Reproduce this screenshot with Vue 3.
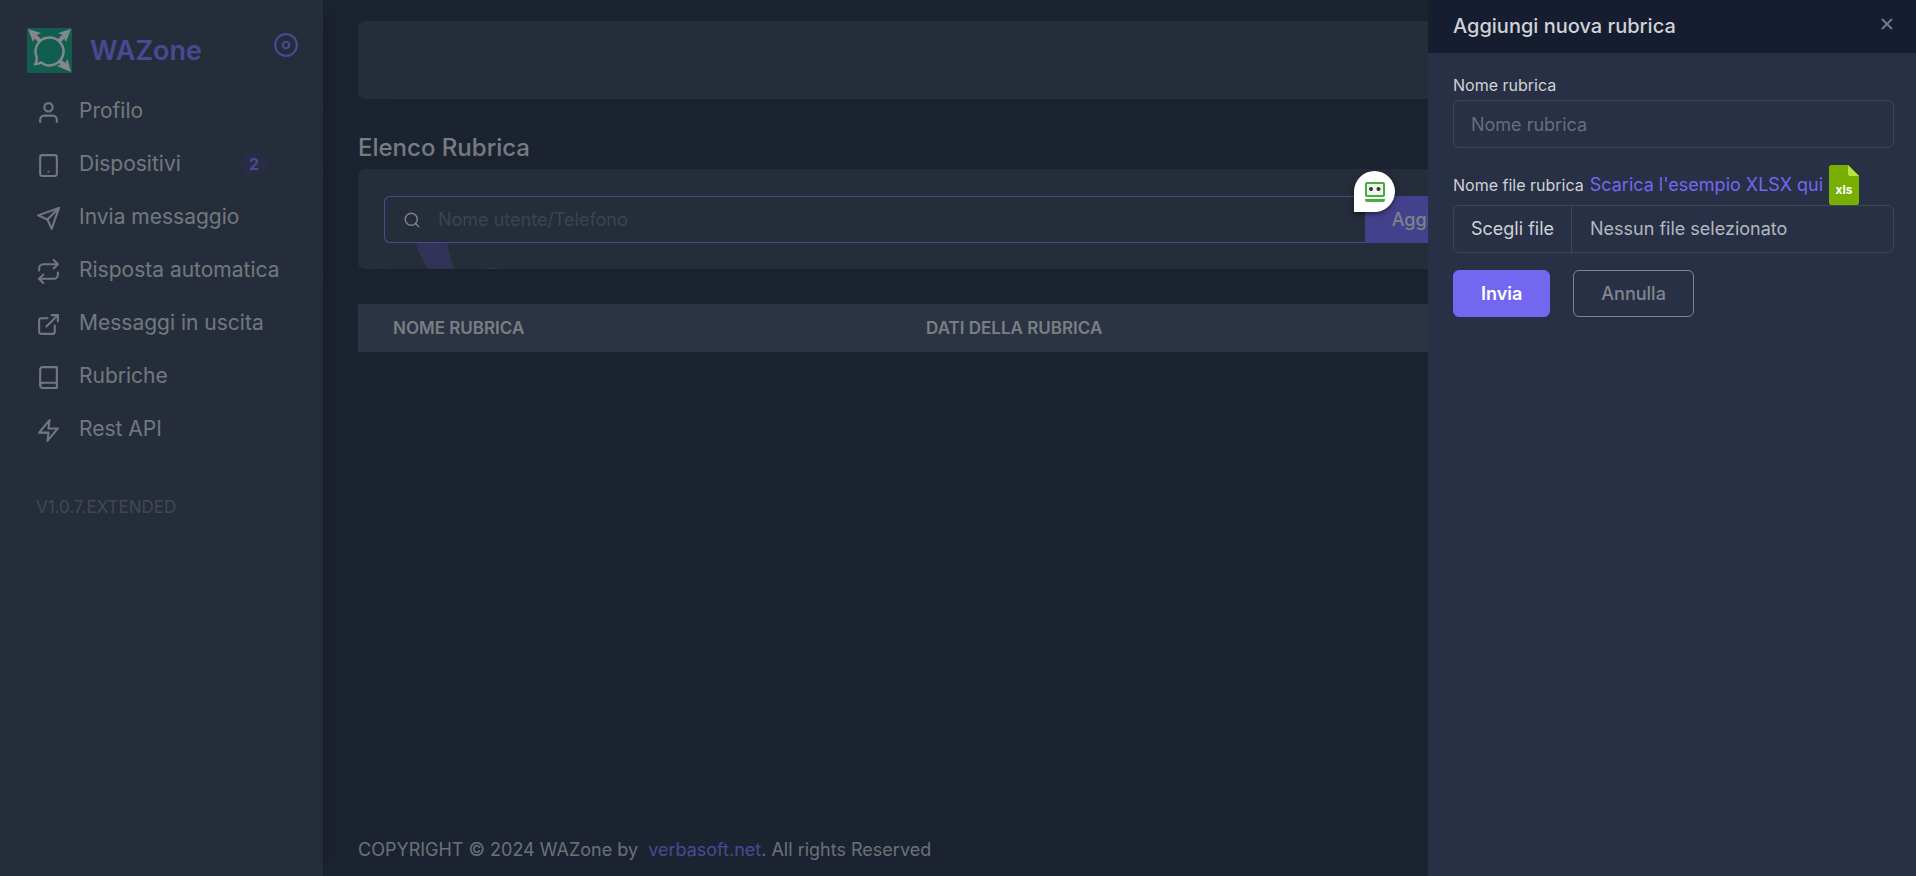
<script setup>
import { ref } from 'vue'

const menu = [
  { label: 'Profilo', paths: ['M20 21v-2a4 4 0 0 0-4-4H8a4 4 0 0 0-4 4v2', 'M12 3a4 4 0 1 0 0 8a4 4 0 1 0 0-8'] },
  { label: 'Dispositivi', badge: 2, paths: ['M6 2h12a2 2 0 0 1 2 2v16a2 2 0 0 1-2 2H6a2 2 0 0 1-2-2V4a2 2 0 0 1 2-2z', 'M12 18h.01'] },
  { label: 'Invia messaggio', paths: ['M22 2L11 13', 'M22 2l-7 20-4-9-9-4 20-7z'] },
  { label: 'Risposta automatica', paths: ['M17 1l4 4-4 4', 'M3 11V9a4 4 0 0 1 4-4h14', 'M7 23l-4-4 4-4', 'M21 13v2a4 4 0 0 1-4 4H3'] },
  { label: 'Messaggi in uscita', paths: ['M18 13v6a2 2 0 0 1-2 2H5a2 2 0 0 1-2-2V8a2 2 0 0 1 2-2h6', 'M15 3h6v6', 'M10 14L21 3'] },
  { label: 'Rubriche', paths: ['M4 19.5A2.5 2.5 0 0 1 6.500 17H20', 'M6.500 2H20v20H6.500A2.500 2.500 0 0 1 4 19.500v-15A2.500 2.500 0 0 1 6.500 2z'] },
  { label: 'Rest API', paths: ['M13 2L3 14h9l-1 8 10-12h-9l1-8z'] },
]

const search = ref('')
const name = ref('')
const fileName = ref('')

function pickFile(event) {
  fileName.value = event.target.files[0]?.name ?? ''
}
</script>

<template>
  <div class="app">
    <aside class="sidebar">
      <div class="brand">
        <svg class="logo" viewBox="0 0 45 45" aria-hidden="true">
          <rect width="45" height="45" rx="1" fill="#00906f" />
          <path d="M14 34.500A14 14 0 1 0 9.500 28.500Q10.500 32 8.500 36Q12 36 14 34.500z" fill="none" stroke="#e4e4e4" stroke-width="2.500" />
          <path d="M6 6l7 7M39 6l-7 7M32 32l7 7" fill="none" stroke="#e4e4e4" stroke-width="4" />
          <path d="M1 1l13 4-4.500 2L11 12 8 10 6 14zM44 1L31 5l4.500 2L34 11l3-1 2 4zM44 44l-3.500-13-2.500 4-3-2-1 3-4 2z" fill="#e4e4e4" />
        </svg>
        <a class="brand-name" href="#">WAZone</a>
        <button class="pin" type="button" aria-label="Menu">
          <svg class="icon" viewBox="0 0 24 24"><circle cx="12" cy="12" r="10" /><circle cx="12" cy="12" r="3" /></svg>
        </button>
      </div>
      <nav class="menu">
        <a v-for="item in menu" :key="item.label" class="menu-item" href="#">
          <svg class="icon" viewBox="0 0 24 24" aria-hidden="true">
            <path v-for="d in item.paths" :key="d" :d="d" />
          </svg>
          <span>{{ item.label }}</span>
          <span v-if="item.badge" class="badge">{{ item.badge }}</span>
        </a>
      </nav>
      <div class="version">V1.0.7.EXTENDED</div>
    </aside>

    <main class="main">
      <div class="card navbar"></div>
      <h1 class="title">Elenco Rubrica</h1>
      <section class="card search-card">
        <svg class="ornament" viewBox="0 0 84 26" aria-hidden="true">
          <path d="M0 0h31q3 14 7 26H13Q3 14 0 0z" />
          <path d="M69 26q5-3 12 0z" />
        </svg>
        <div class="search-row">
          <label class="search">
            <svg class="icon" viewBox="0 0 24 24" aria-hidden="true"><circle cx="11" cy="11" r="8" /><path d="M21 21l-4.500-4.500" /></svg>
            <input v-model="search" type="text" aria-label="Nome utente/Telefono" placeholder="Nome utente/Telefono" />
          </label>
          <button class="add" type="button">Aggiungi</button>
        </div>
      </section>
      <table class="table">
        <thead>
          <tr><th>Nome rubrica</th><th>Dati della rubrica</th><th></th></tr>
        </thead>
      </table>
      <footer class="footer">COPYRIGHT © 2024 WAZone by &nbsp;<a href="#">verbasoft.net</a>. All rights Reserved</footer>
    </main>

    <div class="backdrop"></div>

    <button class="robo" type="button" aria-label="RoboForm">
      <svg viewBox="0 0 20 20">
        <rect x="1" y="1" width="18" height="13" rx="1" fill="#eef4ee" stroke="#45ad3a" stroke-width="2" />
        <circle cx="6" cy="7" r="2" fill="#333" /><circle cx="13.500" cy="7" r="2" fill="#333" />
        <path d="M0 17h20v1a2 2 0 0 1-2 2H2a2 2 0 0 1-2-2z" fill="#45ad3a" />
      </svg>
    </button>

    <aside class="drawer" role="dialog" aria-labelledby="drawer-title">
      <header class="drawer-head">
        <h2 id="drawer-title">Aggiungi nuova rubrica</h2>
        <button class="close" type="button" aria-label="Chiudi">
          <svg viewBox="0 0 12 12"><path d="M1 1l10 10M11 1L1 11" /></svg>
        </button>
      </header>
      <form class="form" @submit.prevent>
        <label class="label" for="book-name">Nome rubrica</label>
        <input id="book-name" v-model="name" class="field" type="text" placeholder="Nome rubrica" />
        <div class="file-label">
          <label class="label" for="book-file">Nome file rubrica</label>
          <a href="#">Scarica l'esempio XLSX qui</a>
          <svg class="xls" viewBox="0 0 30 40" aria-hidden="true">
            <path d="M2 0h17l11 11v27a2 2 0 0 1-2 2H2a2 2 0 0 1-2-2V2a2 2 0 0 1 2-2z" fill="#78ad02" />
            <path d="M19 0l11 11H21a2 2 0 0 1-2-2z" fill="#b4e83b" />
            <text x="15" y="29" text-anchor="middle">xls</text>
          </svg>
        </div>
        <label class="field file">
          <input id="book-file" type="file" @change="pickFile" />
          <span class="file-button">Scegli file</span>
          <span class="file-name">{{ fileName || 'Nessun file selezionato' }}</span>
        </label>
        <div class="actions">
          <button class="submit" type="submit">Invia</button>
          <button class="cancel" type="button">Annulla</button>
        </div>
      </form>
    </aside>
  </div>
</template>

<style>
body {
  background: #161d31;
}
</style>

<style scoped>
.app {
  display: flex;
  min-height: 100vh;
  background: #161d31;
  color: #d0d2d6;
  font-family: Inter, "Open Sans", sans-serif;
  font-size: 18px;
  line-height: 24px;
}
.app * {
  box-sizing: border-box;
}
a {
  color: #7367f0;
  text-decoration: none;
}
button,
input {
  font: inherit;
}
button {
  cursor: pointer;
}
.icon {
  width: 24px;
  height: 24px;
  flex: none;
  fill: none;
  stroke: currentColor;
  stroke-width: 2;
  stroke-linecap: round;
  stroke-linejoin: round;
}
.sidebar {
  width: 323px;
  flex: none;
  background: #2a3044;
  box-shadow: 0 0 16px rgba(10, 14, 28, 0.8);
}
.brand {
  display: flex;
  align-items: center;
  height: 45px;
  margin: 28px 24px 11px 27px;
}
.logo {
  width: 45px;
  height: 45px;
}
.brand-name {
  margin-left: 18px;
  font-size: 27px;
  font-weight: 600;
  line-height: 36px;
}
.pin {
  margin: 0 0 12px auto;
  padding: 0;
  border: 0;
  background: none;
  color: #7367f0;
  line-height: 0;
}
.pin .icon {
  width: 26px;
  height: 26px;
}
.menu-item {
  display: flex;
  align-items: center;
  height: 53px;
  padding-left: 36px;
  color: #c2c5ca;
  font-size: 21px;
}
.menu-item > span {
  margin-left: 18px;
}
.menu-item .icon {
  width: 25px;
  height: 25px;
  margin-top: 3px;
}
.menu-item .badge {
  width: 26px;
  margin: 0 56px 0 auto;
  border-radius: 13px;
  background: #2f3158;
  color: #7367f0;
  font-size: 16px;
  font-weight: 700;
  line-height: 26px;
  text-align: center;
}
.version {
  margin: 40px 36px;
  color: #5e6475;
  font-size: 17px;
}
.main {
  display: flex;
  flex: 1;
  flex-direction: column;
  min-width: 0;
  padding: 21px 35px 14px;
}
.card {
  border-radius: 7px;
  background: #2a3044;
  box-shadow: 0 5px 30px rgba(16, 22, 38, 0.6);
}
.navbar {
  height: 78px;
}
.title {
  margin: 33px 0 5px;
  font-size: 24px;
  font-weight: 500;
  line-height: 32px;
}
.search-card {
  position: relative;
  padding: 27px 26px 26px;
}
.ornament {
  position: absolute;
  bottom: 0;
  left: 58px;
  width: 84px;
  height: 26px;
  fill: #403f80;
}
.search-row {
  display: grid;
  grid-template-columns: 2fr 1fr;
}
.search {
  display: flex;
  align-items: center;
  height: 47px;
  padding: 0 18px;
  border: 1px solid #7367f0;
  border-right: 0;
  border-radius: 6px 0 0 6px;
}
.search .icon {
  width: 18px;
  height: 18px;
}
.search input {
  flex: 1;
  min-width: 0;
  padding: 0;
  margin-left: 17px;
  border: 0;
  outline: 0;
  background: none;
  color: inherit;
}
.search input::placeholder {
  color: #565c6e;
  opacity: 1;
}
.add {
  justify-self: start;
  padding: 0 27px;
  border: 0;
  border-radius: 0 6px 6px 0;
  background: #6658e8;
  color: #d8d8e0;
  font-weight: 500;
}
.table {
  width: 100%;
  margin-top: 35px;
  border-collapse: collapse;
  table-layout: fixed;
}
.table th {
  height: 48px;
  padding: 0 34px 0 35px;
  background: #363d55;
  font-size: 17px;
  font-weight: 600;
  text-align: left;
  text-transform: uppercase;
}
.table th:nth-child(-n + 2) {
  width: 35%;
}
.footer {
  margin-top: auto;
  color: #b4b7bd;
}
.backdrop {
  position: fixed;
  inset: 0;
  background: rgba(34, 41, 47, 0.5);
}
.robo {
  position: fixed;
  top: 171px;
  right: 521px;
  width: 41px;
  height: 41px;
  padding: 11px 10px 10px 11px;
  border: 0;
  border-radius: 21px 21px 21px 0;
  background: #fff;
  box-shadow: 0 2px 5px rgba(0, 0, 0, 0.5);
  line-height: 0;
}
.drawer {
  position: fixed;
  top: 0;
  right: 0;
  bottom: 0;
  width: 488px;
  background: #283046;
}
.drawer-head {
  display: flex;
  align-items: center;
  justify-content: space-between;
  height: 53px;
  padding: 0 23px 2px 25px;
  background: #161d31;
}
.drawer-head h2 {
  margin: 0;
  font-size: 20px;
  font-weight: 500;
}
.close {
  padding: 0 0 3px;
  border: 0;
  background: none;
  line-height: 0;
}
.close svg {
  width: 12px;
  height: 12px;
  fill: none;
  stroke: #747988;
  stroke-width: 2;
}
.form {
  padding: 20px 22px 20px 25px;
}
.label {
  display: block;
  font-size: 16px;
}
.field {
  display: block;
  width: 100%;
  height: 48px;
  margin-top: 3px;
  padding: 0 17px;
  border: 1px solid #404656;
  border-radius: 6px;
  outline: 0;
  background: #283046;
  color: #b4b7bd;
}
.field::placeholder {
  color: #676d7d;
  opacity: 1;
}
.file-label {
  display: flex;
  align-items: center;
  gap: 6px;
  height: 40px;
  margin-top: 17px;
}
.xls {
  width: 30px;
  height: 40px;
}
.xls text {
  fill: #fff;
  font-size: 12px;
  font-weight: 700;
}
.file {
  position: relative;
  display: flex;
  align-items: center;
  margin: 0;
  cursor: pointer;
}
.file input {
  position: absolute;
  inset: 0;
  opacity: 0;
}
.file-button {
  align-self: stretch;
  padding-right: 17px;
  border-right: 1px solid #404656;
  color: #d0d2d6;
  line-height: 46px;
}
.file-name {
  margin-left: 18px;
}
.actions {
  display: flex;
  gap: 23px;
  margin-top: 17px;
}
.actions button {
  height: 47px;
  padding: 0 27px;
  border: 1px solid #7367f0;
  border-radius: 6px;
}
.actions .submit {
  background: #7367f0;
  color: #fff;
  font-weight: 600;
}
.actions .cancel {
  border-color: #82868b;
  background: none;
  color: #82868b;
  font-weight: 500;
}
</style>
